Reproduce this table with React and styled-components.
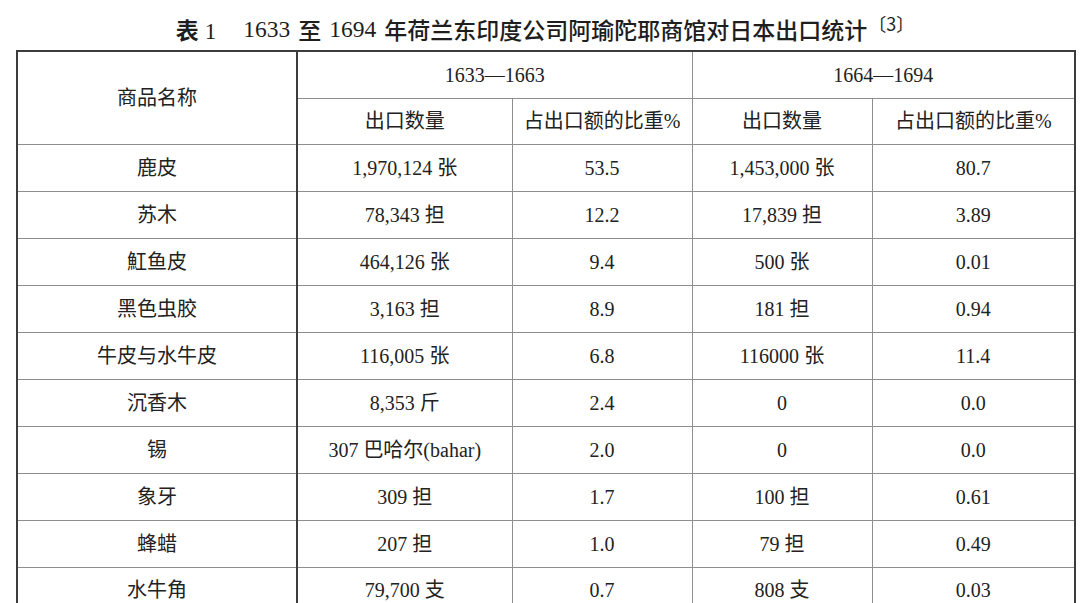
import React from 'react';
import styled, { createGlobalStyle } from 'styled-components';

const GlobalStyle = createGlobalStyle`
  html, body {
    margin: 0;
    padding: 0;
    background: #ffffff;
  }
  body {
    font-family: "Liberation Serif", "Noto Sans CJK SC", serif;
    color: #222;
    overflow: hidden;
  }
`;

const Page = styled.div`
  width: 1080px;
  height: 603px;
  padding: 0 6px 0 16px;
  box-sizing: border-box;
`;

const Title = styled.div`
  height: 50px;
  display: flex;
  align-items: center;
  justify-content: center;
  padding: 8px 0 0 0;
  box-sizing: border-box;
  font-family: "Liberation Serif", "Noto Sans CJK SC", sans-serif;
  font-size: 23px;
  font-weight: 500;
  color: #1e1e1e;
  white-space: nowrap;
`;

const TableNo = styled.span`
  font-family: "Noto Sans CJK SC", sans-serif;
  font-weight: 700;
  margin-right: 27px;

  & > span {
    font-family: "Liberation Serif", serif;
    font-weight: 400;
    margin-left: 6px;
  }
`;

const Num = styled.span`
  font-family: "Liberation Serif", serif;
  font-weight: 400;
  font-size: 23.5px;
`;

const TitleWord = styled.span`
  margin: 0 ${p => p.$right || 0}px 0 ${p => p.$left || 0}px;
`;

const Ref = styled.span`
  font-family: "Noto Sans CJK SC", serif;
  font-size: 18px;
  font-weight: 400;
  position: relative;
  top: -6px;
  margin-left: 1px;
`;

const Table = styled.table`
  width: 1058px;
  border-collapse: collapse;
  table-layout: fixed;
  border: 2px solid #3c3c3c;
  font-size: 20px;
`;

const Row = styled.tr`
  height: ${p => p.$h || 47}px;
`;

const Cell = styled.td`
  border: 1px solid #8e8e8e;
  border-right: ${p => (p.$strong ? '2px solid #3c3c3c' : '1px solid #8e8e8e')};
  text-align: center;
  vertical-align: middle;
  padding: 0;
  line-height: 1;
  white-space: nowrap;
  color: #222;
`;

const HeadCell = styled(Cell).attrs({ as: 'th' })`
  font-weight: 400;
`;

const Unit = styled.span`
  margin-left: 5px;
`;

const rows = [
  ['鹿皮', '1,970,124', '张', '53.5', '1,453,000', '张', '80.7'],
  ['苏木', '78,343', '担', '12.2', '17,839', '担', '3.89'],
  ['魟鱼皮', '464,126', '张', '9.4', '500', '张', '0.01'],
  ['黑色虫胶', '3,163', '担', '8.9', '181', '担', '0.94'],
  ['牛皮与水牛皮', '116,005', '张', '6.8', '116000', '张', '11.4'],
  ['沉香木', '8,353', '斤', '2.4', '0', '', '0.0'],
  ['锡', '307', '巴哈尔(bahar)', '2.0', '0', '', '0.0'],
  ['象牙', '309', '担', '1.7', '100', '担', '0.61'],
  ['蜂蜡', '207', '担', '1.0', '79', '担', '0.49'],
  ['水牛角', '79,700', '支', '0.7', '808', '支', '0.03'],
];

function Qty({ n, u }) {
  return (
    <>
      {n}
      {u && <Unit>{u}</Unit>}
    </>
  );
}

export default function App() {
  return (
    <Page>
      <GlobalStyle />
      <Title>
        <TableNo>表<span>1</span></TableNo>
        <Num>1633</Num>
        <TitleWord $left={8} $right={8}>至</TitleWord>
        <Num>1694</Num>
        <TitleWord $left={8}>年荷兰东印度公司阿瑜陀耶商馆对日本出口统计</TitleWord>
        <Ref>〔3〕</Ref>
      </Title>
      <Table>
        <colgroup>
          <col style={{ width: 280 }} />
          <col style={{ width: 215 }} />
          <col style={{ width: 180 }} />
          <col style={{ width: 180 }} />
          <col style={{ width: 203 }} />
        </colgroup>
        <thead>
          <Row $h={47}>
            <HeadCell rowSpan={2} $strong>商品名称</HeadCell>
            <HeadCell colSpan={2}>1633—1663</HeadCell>
            <HeadCell colSpan={2}>1664—1694</HeadCell>
          </Row>
          <Row $h={46}>
            <HeadCell>出口数量</HeadCell>
            <HeadCell>占出口额的比重%</HeadCell>
            <HeadCell>出口数量</HeadCell>
            <HeadCell>占出口额的比重%</HeadCell>
          </Row>
        </thead>
        <tbody>
          {rows.map(r => (
            <Row key={r[0]} $h={47}>
              <Cell $strong>{r[0]}</Cell>
              <Cell><Qty n={r[1]} u={r[2]} /></Cell>
              <Cell>{r[3]}</Cell>
              <Cell><Qty n={r[4]} u={r[5]} /></Cell>
              <Cell>{r[6]}</Cell>
            </Row>
          ))}
        </tbody>
      </Table>
    </Page>
  );
}
